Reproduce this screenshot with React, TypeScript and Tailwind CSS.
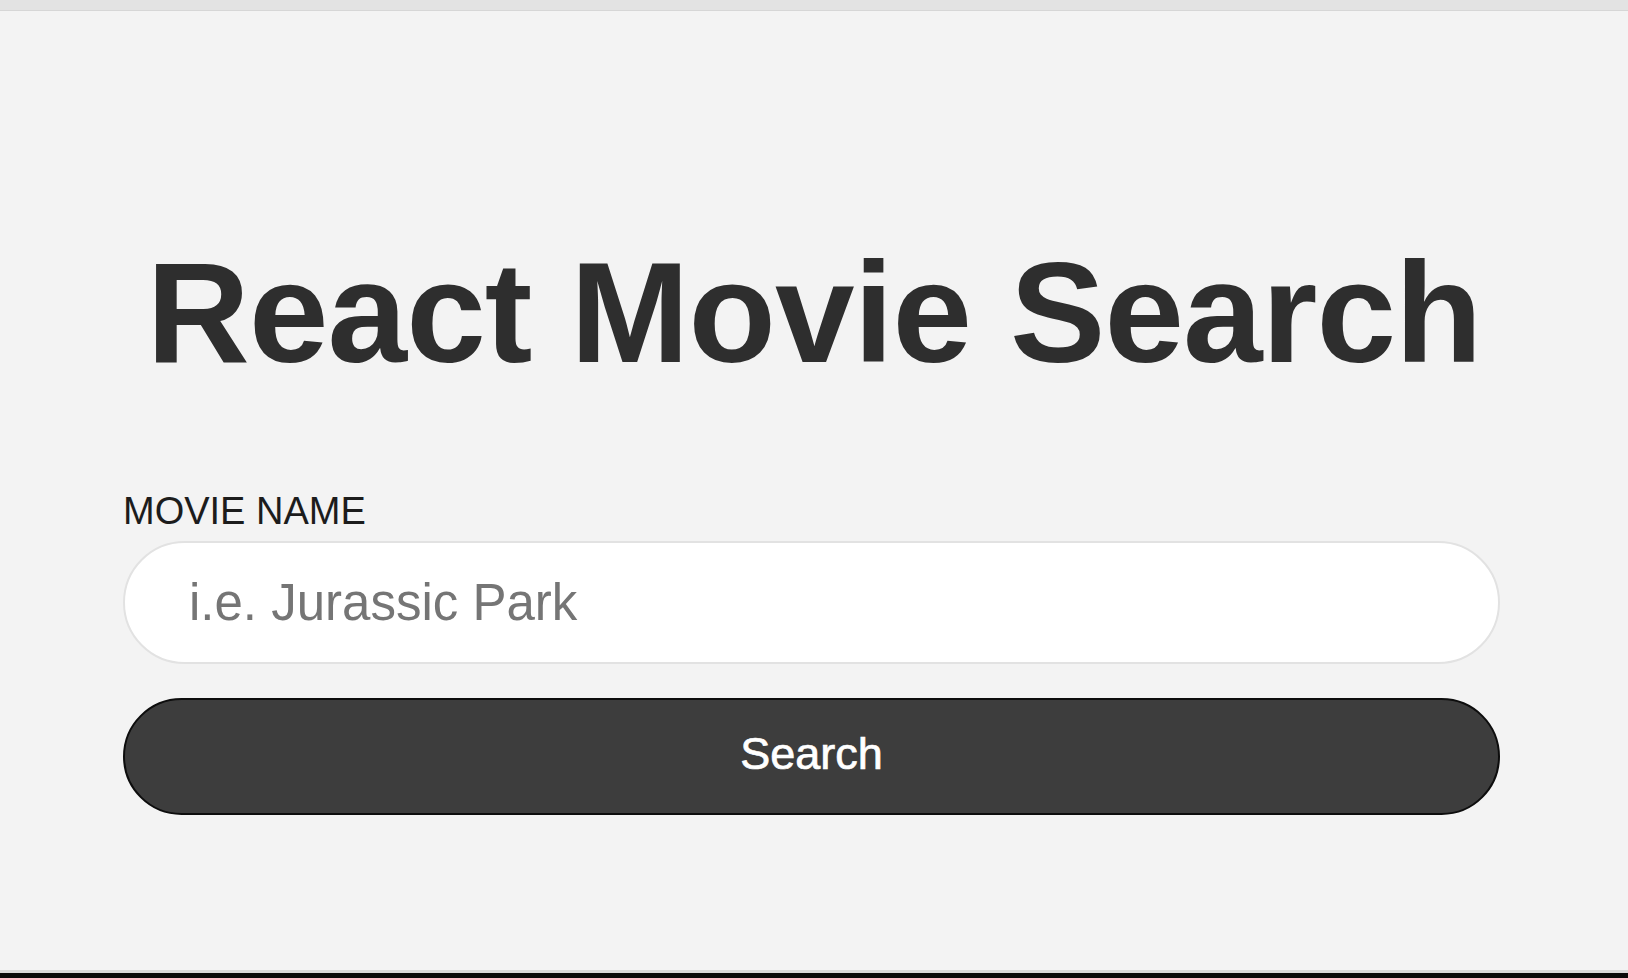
import { useState } from 'react'

export default function App() {
  const [query, setQuery] = useState('')

  return (
    <div className="h-[978px] flex flex-col bg-[#f3f3f3] font-['Liberation_Sans',Arial,sans-serif]">
      {/* browser chrome strip */}
      <div className="h-[11px] bg-[#e3e3e3] border-b border-[#d6d6d6] shrink-0"></div>

      <main className="flex-1 flex flex-col">
        <h1 className="mt-[230px] text-center text-[143px] leading-[143px] font-bold text-[#2e2e2e] tracking-[-0.9px]">
          React Movie Search
        </h1>

        <form
          className="ml-[123px] w-[1377px] mt-[108px] flex flex-col"
          onSubmit={(e) => e.preventDefault()}
        >
          <label htmlFor="query" className="text-[38px] leading-[38px] text-[#1c1c1c] uppercase">
            Movie Name
          </label>
          <input
            id="query"
            type="text"
            value={query}
            onChange={(e) => setQuery(e.target.value)}
            placeholder="i.e. Jurassic Park"
            className="mt-[11px] h-[123px] w-full rounded-full bg-white border-2 border-[#e2e2e2] pl-[64px] pr-8 text-[51px] text-[#333] placeholder:text-[#757575] outline-none"
          />
          <button
            type="submit"
            className="mt-[34px] h-[117px] w-full rounded-full bg-[#3d3d3d] border-2 border-[#0d0d0d] text-white text-[45px] leading-none pb-[6px] [-webkit-text-stroke:0.7px_white]"
          >
            Search
          </button>
        </form>
      </main>

      {/* bottom edge */}
      <div className="h-[3px] bg-[#d9d9d9] shrink-0"></div>
      <div className="h-[5px] bg-[#0a0a0a] shrink-0"></div>
    </div>
  )
}
